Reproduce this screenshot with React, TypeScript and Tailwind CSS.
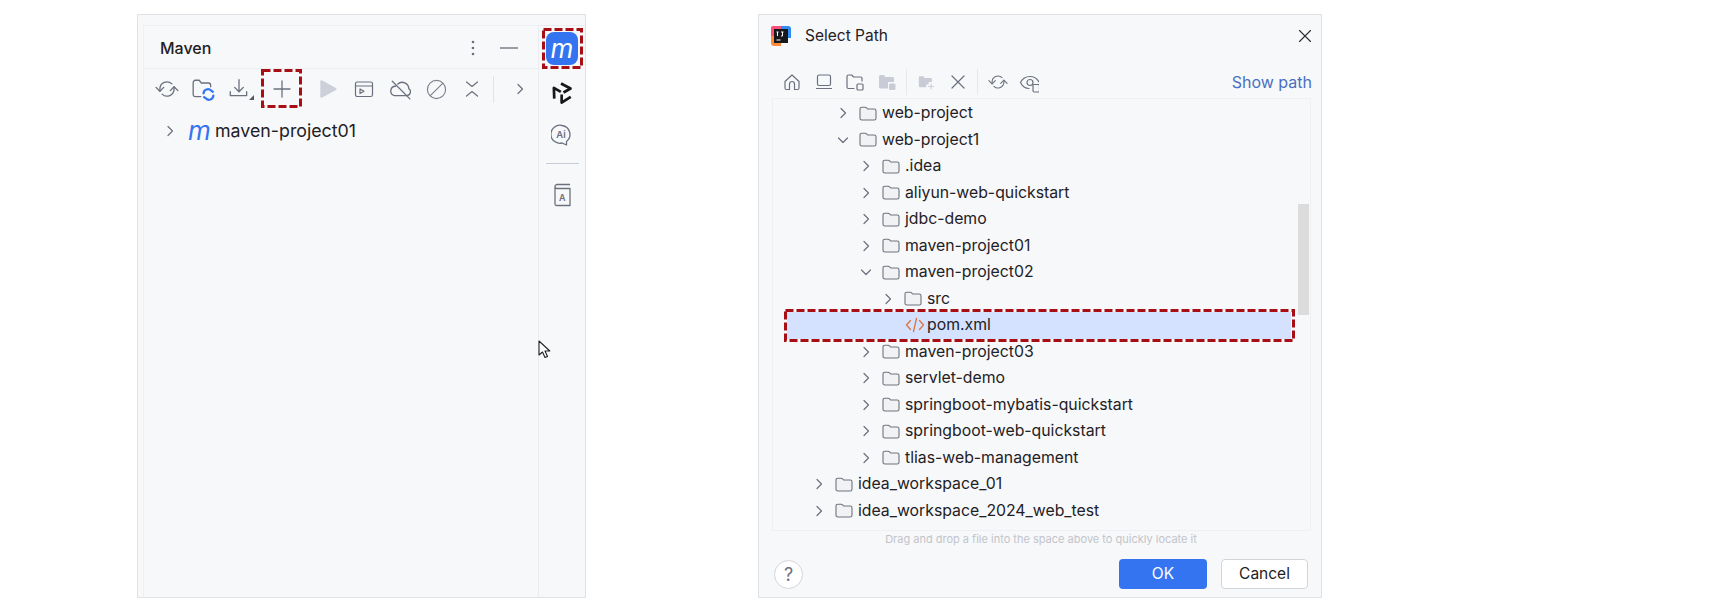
const ink = "#6c707e";

function Icon({ children, size = 20, box = 20 }: { children: React.ReactNode; size?: number; box?: number }) {
  return (
    <svg width={size} height={size} viewBox={`0 0 ${box} ${box}`} fill="none" stroke={ink} strokeWidth={1.2} strokeLinecap="round" strokeLinejoin="round">
      {children}
    </svg>
  );
}

function Chevron({ open = false }: { open?: boolean }) {
  return (
    <svg width="16" height="16" viewBox="0 0 16 16" fill="none" stroke="#6c707e" strokeWidth={1.2} strokeLinecap="round" strokeLinejoin="round">
      {open ? <path d="M3.5 6 8 10.5 12.5 6" /> : <path d="M6 3.5 10.5 8 6 12.5" />}
    </svg>
  );
}

function Folder() {
  return (
    <svg width="18" height="15" viewBox="0 0 18 15" fill="#f1f2f4" stroke="#6f737c" strokeWidth={1.1} strokeLinejoin="round">
      <path d="M1 3a1.8 1.8 0 0 1 1.8-1.8h3.4c.6 0 1 .2 1.4.6l1 1.2h6.6A1.8 1.8 0 0 1 17 4.8v7.4a1.8 1.8 0 0 1-1.8 1.8H2.800A1.800 1.800 0 0 1 1 12.200z" />
    </svg>
  );
}

function Refresh({ size = 24 }: { size?: number }) {
  return (
    <Icon size={size} box={22}>
      <path d="M1 9.500l3.500 3.500L8 9.500" />
      <path d="M4.500 13v-2a6.500 6.500 0 0 1 11-4.700" />
      <path d="M14 12.500L17.500 9l3.500 3.500" />
      <path d="M17.500 9v2a6.500 6.500 0 0 1-11 4.700" />
    </Icon>
  );
}

function CornerArrow() {
  return <span className="absolute right-[-3px] bottom-[1px] h-0 w-0 border-b-[5px] border-l-[5px] border-b-[#55585f] border-l-transparent" />;
}

// red dashed annotation drawn over the capture
function RedBox({ className, w, h }: { className: string; w: number; h: number }) {
  return (
    <svg className={`absolute ${className}`} width={w} height={h} fill="none" stroke="#a80f14" strokeWidth={3} strokeDasharray="8 3">
      <rect x="1.500" y="1.500" width={w - 3} height={h - 3} />
    </svg>
  );
}

function ToolSlot({ children, className = "w-9" }: { children: React.ReactNode; className?: string }) {
  return <div className={`relative flex h-full shrink-0 items-center justify-center ${className}`}>{children}</div>;
}

function MavenPanel() {
  return (
    <div className="relative flex h-[584px] w-[449px] border border-[#dfe1e5] bg-[#f7f8fa] pt-[10px] pl-[5px]">
      <div className="flex flex-1 flex-col border-t border-l border-[#eef0f3]">
        <div className="flex h-[43px] items-center border-b border-[#eceef1] pt-[2px] pl-[16px]">
          <span className="text-[16px] font-medium text-[#1f2124]">Maven</span>
          <svg className="mr-[1px] ml-auto" width="16" height="20" viewBox="0 0 16 20" fill="#6c707e">
            <circle cx="8" cy="4" r="1.300" />
            <circle cx="8" cy="10" r="1.300" />
            <circle cx="8" cy="16" r="1.300" />
          </svg>
          <div className="mr-[20px] ml-[18px] h-[1.500px] w-[18px] bg-[#9a9da6]" />
        </div>
        <div className="flex h-[40px] items-center pl-[5px]">
          <ToolSlot><Refresh /></ToolSlot>
          <ToolSlot>
            <Icon size={24} box={22}>
              <path d="M9 18H4a2 2 0 0 1-2-2V5a2 2 0 0 1 2-2h3.500l2 2.500H16a2 2 0 0 1 2 2v1.500" />
              <path stroke="#3574f0" strokeWidth={2} d="M11.500 15a4 4 0 0 1 7-2.500l1.500 1M20.500 17a4 4 0 0 1-7 2.500l-1.500-1" />
            </Icon>
          </ToolSlot>
          <ToolSlot>
            <div className="relative">
              <Icon size={24} box={22}>
                <path d="M11 2.500v10.500M7 9.500l4 4 4-4" />
                <path d="M3 13.500v3.500h15v-3.500" />
              </Icon>
              <CornerArrow />
            </div>
          </ToolSlot>
          <ToolSlot className="ml-[4px] w-[41px]">
            <svg width="22" height="22" viewBox="0 0 22 22" stroke="#6c707e" strokeWidth={1.300} strokeLinecap="round">
              <path d="M11 3v16M3 11h16" />
            </svg>
            <RedBox className="top-0 left-0" w={41} h={39} />
          </ToolSlot>
          <ToolSlot className="ml-[8px] w-9">
            <svg width="22" height="22" viewBox="0 0 20 20" fill="#cdd0d8">
              <path d="M3 3.200c0-1 1-1.500 1.800-1l12.400 6.900c.8.400.8 1.500 0 1.900L4.800 17.800c-.8.500-1.800 0-1.800-1z" />
            </svg>
          </ToolSlot>
          <ToolSlot>
            <Icon>
              <rect x="1.500" y="3" width="17" height="14.500" rx="1.800" />
              <path d="M1.500 7h17" />
              <path d="M6 10v4.500l4-2.200z" />
            </Icon>
          </ToolSlot>
          <ToolSlot>
            <Icon size={22}>
              <path d="M6 7.500a4.300 4.300 0 0 0-1 8.500h11a3.400 3.400 0 0 0 2-6.200A6 6 0 0 0 8 5.500" />
              <path d="M3 3l16 16" />
            </Icon>
          </ToolSlot>
          <ToolSlot>
            <svg width="21" height="21" viewBox="0 0 22 22" fill="none" stroke="#7d818c" strokeWidth={1.200} strokeLinecap="round">
              <circle cx="11" cy="11" r="9.500" />
              <path d="M4.500 17.500 17.500 4.500" />
            </svg>
          </ToolSlot>
          <ToolSlot>
            <Icon>
              <path d="M4.500 3 10 7.500 15.500 3M4.500 17 10 12.500l5.500 4.500" />
            </Icon>
          </ToolSlot>
          <div className="ml-[3px] h-[27px] w-px bg-[#e1e3e8]" />
          <ToolSlot className="ml-[18px] w-4"><Chevron /></ToolSlot>
        </div>
        <div className="flex h-[44px] items-center pl-[18px]">
          <Chevron />
          <span className="ml-[10px] w-[27px] text-[26px] leading-none font-normal text-[#3574f0] italic">m</span>
          <span className="text-[17.800px] text-[#1f2124]">maven-project01</span>
        </div>
      </div>
      <div className="flex w-[47px] flex-col items-center border-t border-l border-[#eaecf0] pt-[6px]">
        <div className="relative flex h-[33px] w-[32px] items-center justify-center rounded-[8px] bg-[#3574f0]">
          <span className="text-[26px] leading-none font-normal text-white italic">m</span>
          <RedBox className="-top-[4px] -left-[4px]" w={41} h={41} />
        </div>
        <div className="mt-[16px]">
          <svg width="24" height="24" viewBox="0 0 24 24" fill="none" stroke="#17181a" strokeWidth={2.700} strokeLinejoin="round">
            <path d="M11 2.500 20.500 7.500 13.500 11.500" />
            <path d="M11 2.500 20.500 7.500 13.500 11.500" transform="rotate(120 12 12)" />
            <path d="M11 2.500 20.500 7.500 13.500 11.500" transform="rotate(240 12 12)" />
          </svg>
        </div>
        <div className="mt-[19px]">
          <svg width="22" height="22" viewBox="0 0 22 22" fill="none" stroke="#6c707e" strokeWidth={1.300} strokeLinejoin="round">
            <path d="M11 1.500a9 9 0 1 0 0 17.500l4.500 2v-3.500A9 9 0 0 0 11 1.500z" />
            <text x="5.200" y="14" fontSize="9.500" fontFamily="Inter" fontWeight="600" fill="#6c707e" stroke="none">Ai</text>
          </svg>
        </div>
        <div className="mt-[17px] h-px w-[33px] bg-[#c9ccd6]" />
        <div className="mt-[19px]">
          <svg width="20" height="24" viewBox="0 0 20 24" fill="none" stroke="#6c707e" strokeWidth={1.300} strokeLinejoin="round">
            <path d="M3 3.500A2 2 0 0 1 5 1.500h13M3 3.500V21a1.500 1.500 0 0 0 1.500 1.500H18V5.500H5A2 2 0 0 1 3 3.500z" />
            <text x="7" y="18" fontSize="9" fontFamily="Inter" fontWeight="600" fill="#6c707e" stroke="none">A</text>
          </svg>
        </div>
      </div>
      {/* mouse pointer left in the capture */}
      <svg className="absolute top-[325px] left-[400px]" width="14" height="20" viewBox="0 0 14 20" fill="#ffffff" stroke="#1f2124" strokeWidth={1.100} strokeLinejoin="round">
        <path d="M1 1v14l3.500-3 2.500 5.500 2.500-1L7 11h4.800z" />
      </svg>
    </div>
  );
}

type Row = { label: string; indent: string; open?: boolean; file?: boolean };

const rows: Row[] = [
  { label: "web-project", indent: "pl-[62px]" },
  { label: "web-project1", indent: "pl-[62px]", open: true },
  { label: ".idea", indent: "pl-[85px]" },
  { label: "aliyun-web-quickstart", indent: "pl-[85px]" },
  { label: "jdbc-demo", indent: "pl-[85px]" },
  { label: "maven-project01", indent: "pl-[85px]" },
  { label: "maven-project02", indent: "pl-[85px]", open: true },
  { label: "src", indent: "pl-[107px]" },
  { label: "pom.xml", indent: "pl-[107px]", file: true },
  { label: "maven-project03", indent: "pl-[85px]" },
  { label: "servlet-demo", indent: "pl-[85px]" },
  { label: "springboot-mybatis-quickstart", indent: "pl-[85px]" },
  { label: "springboot-web-quickstart", indent: "pl-[85px]" },
  { label: "tlias-web-management", indent: "pl-[85px]" },
  { label: "idea_workspace_01", indent: "pl-[38px]" },
  { label: "idea_workspace_2024_web_test", indent: "pl-[38px]" },
  { label: "", indent: "pl-[38px]" },
];

function TreeRow({ row }: { row: Row }) {
  if (row.file) {
    return (
      <div className="relative mr-[19px] ml-[14px] flex h-[26.500px] items-center bg-[#d4e2ff] pl-[93px]">
        <div className="flex w-[16px]" />
        <svg className="ml-[9px]" width="20" height="18" viewBox="0 0 20 18" fill="none" stroke="#dc7440" strokeWidth={1.300} strokeLinecap="round" strokeLinejoin="round">
          <path d="M5.500 4.500 1.500 9l4 4.500M14.500 4.500l4 4.500-4 4.500M11.500 2.500l-3 13" />
        </svg>
        <span className="ml-[2px] text-[15.800px] text-[#1f2124]">{row.label}</span>
        <RedBox className="-top-[3px] -left-[3px]" w={511} h={33} />
      </div>
    );
  }
  return (
    <div className={`flex h-[26.500px] items-center ${row.indent}`}>
      <Chevron open={row.open} />
      <div className="ml-[8px] flex"><Folder /></div>
      <span className="ml-[5px] text-[15.800px] whitespace-nowrap text-[#1f2124]">{row.label}</span>
    </div>
  );
}

function SelectPathDialog() {
  return (
    <div className="flex h-[584px] w-[564px] flex-col border border-[#dfe1e5] bg-[#f7f8fa]">
      <div className="flex h-[41px] shrink-0 items-center pr-[7px] pl-[11px]">
        <svg width="22" height="22" viewBox="0 0 22 22">
          <path d="M1 3a2 2 0 0 1 2-2h8v10H1z" fill="#ff4e7a" />
          <path d="M11 1h7a3 3 0 0 1 3 3v9H11z" fill="#2f8cf5" />
          <path d="M1 11h10v10H4a3 3 0 0 1-3-3z" fill="#ff8a3c" />
          <rect x="4" y="4" width="14" height="14" fill="#17181a" />
          <path d="M6.500 7h2M7.500 7v4M11 7h2.500M12.500 7v4H11M6.500 15h4" stroke="#ffffff" strokeWidth={1} fill="none" />
        </svg>
        <span className="ml-[13px] text-[15.500px] text-[#1f2124]">Select Path</span>
        <svg className="mr-[1px] ml-auto" width="16" height="16" viewBox="0 0 16 16" stroke="#2b2d30" strokeWidth={1.100} strokeLinecap="round">
          <path d="M2.500 2.500l11 11M13.500 2.500l-11 11" />
        </svg>
      </div>
      <div className="flex h-[42px] shrink-0 items-center pt-[9px] pl-[17px]">
        <ToolSlot className="w-[32px]">
          <Icon>
            <path d="M3 9.500 10 3l7 6.500V16a1.500 1.500 0 0 1-1.500 1.500h-3V12a2.500 2.500 0 0 0-5 0v5.500h-3A1.500 1.500 0 0 1 3 16z" />
          </Icon>
        </ToolSlot>
        <ToolSlot className="w-[31px]">
          <Icon>
            <rect x="3.500" y="3" width="13" height="10.500" rx="1.500" />
            <path d="M2.500 16.500h15" />
          </Icon>
        </ToolSlot>
        <ToolSlot className="w-[32px]">
          <Icon>
            <path d="M9 16.500H3.500A1.500 1.500 0 0 1 2 15V4.500A1.500 1.500 0 0 1 3.500 3h3.200l1.800 2h7A1.500 1.500 0 0 1 17 6.500V9" />
            <rect x="12" y="12" width="6" height="6" rx="1" />
          </Icon>
        </ToolSlot>
        <ToolSlot className="w-[32px]">
          <svg width="20" height="20" viewBox="0 0 20 20" fill="#c9ccd6">
            <path d="M2 4.500A1.500 1.500 0 0 1 3.500 3h3.200l1.800 2h7A1.500 1.500 0 0 1 17 6.500V10h-6v6.500H3.500A1.500 1.500 0 0 1 2 15z" />
            <rect x="12" y="11.500" width="6.500" height="6.500" rx="1.500" />
          </svg>
        </ToolSlot>
        <div className="mr-[11px] ml-[3px] h-[26px] w-px bg-[#e6e8ec]" />
        <ToolSlot className="w-[18px]">
          <svg width="24" height="22" viewBox="0 0 22 20" fill="#c9ccd6">
            <path d="M1 4.500A1.500 1.500 0 0 1 2.500 3h4l1.800 2h7A1.500 1.500 0 0 1 17 6.500V10h-4v3h-3v3.500H2.500A1.500 1.500 0 0 1 1 15z" />
            <path d="M16 12v7M12.500 15.500h7" stroke="#c9ccd6" strokeWidth={1.200} fill="none" />
          </svg>
        </ToolSlot>
        <ToolSlot className="ml-[13px] w-[18px]">
          <svg width="18" height="18" viewBox="0 0 18 18" stroke="#6c707e" strokeWidth={1.200} strokeLinecap="round">
            <path d="M3 3l12 12M15 3 3 15" />
          </svg>
        </ToolSlot>
        <div className="mr-[10px] ml-[10px] h-[26px] w-px bg-[#e6e8ec]" />
        <ToolSlot className="w-[20px]"><Refresh size={22} /></ToolSlot>
        <ToolSlot className="ml-[11px] w-[20px]">
          <Icon size={22}>
            <path d="M10 16.500c-4 0-7-3-8.500-6C3 7.500 6.500 4.500 11 4.500s7.500 2.700 9 5.500" />
            <circle cx="11" cy="10.500" r="3" />
            <rect x="14" y="12.500" width="6.500" height="7.500" rx="1.200" />
          </Icon>
        </ToolSlot>
        <span className="mr-[9px] ml-auto text-[16px] text-[#4a6fc0]">Show path</span>
      </div>
      <div className="relative mr-[10px] ml-[13px] h-[433px] shrink-0 overflow-hidden border border-[#eff0f3] pt-[1px]">
        {rows.map((row, i) => (
          <TreeRow key={row.label + i} row={row} />
        ))}
        <div className="absolute top-[105px] right-[1px] h-[111px] w-[11px] bg-[#dcdcdc]" />
      </div>
      <div className="mt-[1px] pl-[2px] text-center text-[11px] leading-[14px] text-[#c2c4ca]">
        Drag and drop a file into the space above to quickly locate it
      </div>
      <div className="mt-[13px] flex items-center pr-[13px] pl-[15px]">
        <div className="flex h-[29px] w-[29px] items-center justify-center rounded-full border border-[#d3d5db] bg-white text-[18px] text-[#6c707e]">?</div>
        <button className="ml-auto h-[30px] w-[88px] rounded-[4px] bg-[#3574f0] text-[15.500px] text-white">OK</button>
        <button className="ml-[14px] h-[30px] w-[87px] rounded-[4px] border-[1.500px] border-[#d3d5db] bg-white text-[15.500px] text-[#1f2124]">Cancel</button>
      </div>
    </div>
  );
}

export default function App() {
  return (
    <div className="flex h-[609px] w-[1713px] gap-[172px] bg-white pt-[14px] pl-[137px] font-[Inter,sans-serif]">
      <MavenPanel />
      <SelectPathDialog />
    </div>
  );
}
